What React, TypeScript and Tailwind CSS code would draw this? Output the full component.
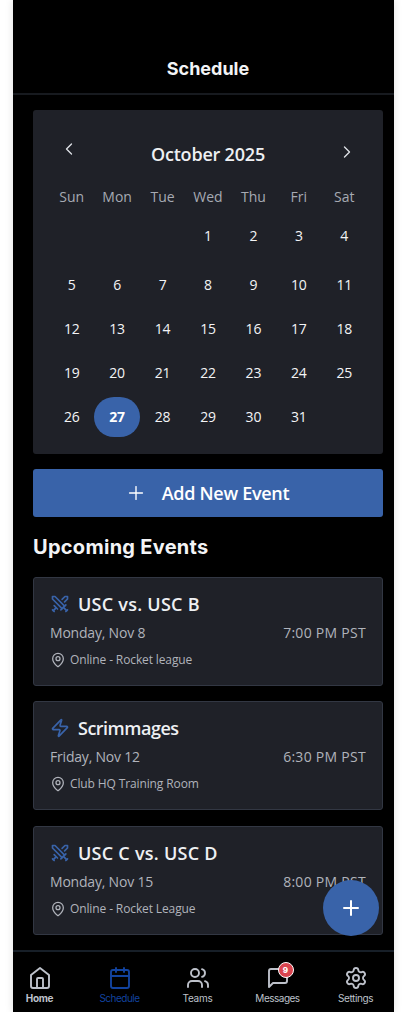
import React from "react";
import {
  Calendar,
  ChevronLeft,
  ChevronRight,
  MapPin,
  Plus,
  Settings,
  Swords,
  Users,
  Zap,
} from "lucide-react";

const weekdays = ["Sun", "Mon", "Tue", "Wed", "Thu", "Fri", "Sat"];

const weeks: (number | null)[][] = [
  [null, null, null, 1, 2, 3, 4],
  [5, 6, 7, 8, 9, 10, 11],
  [12, 13, 14, 15, 16, 17, 18],
  [19, 20, 21, 22, 23, 24, 25],
  [26, 27, 28, 29, 30, 31, null],
];

const selectedDay = 27;

function HomeIcon() {
  return (
    <svg viewBox="0 0 24 24" className="h-6 w-6" fill="none" stroke="currentColor" strokeWidth="1.9" strokeLinejoin="round" strokeLinecap="round">
      <path d="M3 9l9-7 9 7v11a2 2 0 0 1-2 2H5a2 2 0 0 1-2-2z" />
      <path d="M9 22V13a1 1 0 0 1 1-1h4a1 1 0 0 1 1 1v9" />
    </svg>
  );
}

function MessageIcon() {
  return (
    <svg viewBox="0 0 24 24" className="h-6 w-6" fill="none" stroke="currentColor" strokeWidth="1.9" strokeLinejoin="round" strokeLinecap="round">
      <path d="M21 15a2 2 0 0 1-2 2H7l-4 4V5a2 2 0 0 1 2-2h14a2 2 0 0 1 2 2z" />
    </svg>
  );
}

function CalendarCard() {
  return (
    <section className="h-[344px] shrink-0 rounded-[3px] bg-[#1f2128] px-4 pt-[15px]">
      <div className="flex h-14 items-center justify-between pr-[10px] pl-[10px]">
        <button className="-mt-2" aria-label="Previous month">
          <ChevronLeft className="h-5 w-5 text-[#dee1e6]" strokeWidth={1.6} />
        </button>
        <h2 className="mt-px text-[18px] leading-7 font-semibold tracking-[-0.2px] text-[#eef0f3]">October 2025</h2>
        <button className="-mt-[2px]" aria-label="Next month">
          <ChevronRight className="h-5 w-5 text-[#dee1e6]" strokeWidth={1.6} />
        </button>
      </div>
      <div className="grid h-[30px] grid-cols-7 items-center text-center text-[14px] text-[#a6aab3]">
        {weekdays.map((name) => (
          <span key={name}>{name}</span>
        ))}
      </div>
      <div className="flex flex-col gap-1 pt-[5px]">
        {weeks.map((week, w) => (
          <div key={w} className={w === 0 ? "mb-[5px] grid grid-cols-7" : "grid grid-cols-7"}>
            {week.map((day, d) => (
              <span
                key={d}
                className={
                  day === selectedDay
                    ? "flex h-10 items-center justify-center rounded-[20px] bg-[#3963a9] pb-px text-[14px] font-bold tracking-[-0.2px] text-white"
                    : "flex h-10 items-center justify-center pb-px text-[14px] tracking-[-0.2px] text-[#f3f4f6]"
                }
              >
                {day}
              </span>
            ))}
          </div>
        ))}
      </div>
    </section>
  );
}

type EventItem = {
  title: string;
  titleClass: string;
  date: string;
  time: string;
  place: string;
  kind: "match" | "practice";
};

const events: EventItem[] = [
  { title: "USC vs. USC B", titleClass: "tracking-[0.25px]", date: "Monday, Nov 8", time: "7:00 PM PST", place: "Online - Rocket league", kind: "match" },
  { title: "Scrimmages", titleClass: "tracking-[-0.5px]", date: "Friday, Nov 12", time: "6:30 PM PST", place: "Club HQ Training Room", kind: "practice" },
  { title: "USC C vs. USC D", titleClass: "tracking-[0.25px]", date: "Monday, Nov 15", time: "8:00 PM PST", place: "Online - Rocket League", kind: "match" },
];

function EventCard({ event }: { event: EventItem }) {
  const Icon = event.kind === "match" ? Swords : Zap;
  return (
    <article className="h-[109px] rounded-[3px] border border-[#323743] bg-[#1f2128] px-4 pt-3 last:mt-px">
      <div className="flex h-7 items-center gap-2">
        <Icon className="h-5 w-5 text-[#3963a9]" strokeWidth={2} />
        <h3 className={"-mt-px text-[18px] leading-7 font-semibold text-[#eef0f3] " + event.titleClass}>{event.title}</h3>
      </div>
      <div className="mt-1 flex h-5 items-center justify-between text-[14px] text-[#b0b3bb]">
        <span className="tracking-[-0.2px]">{event.date}</span>
        <span className="tracking-[0.28px]">{event.time}</span>
      </div>
      <div className="mt-2 flex h-5 items-center gap-1 text-[12px] tracking-[-0.12px] text-[#b0b3bb]">
        <MapPin className="h-4 w-4" strokeWidth={1.9} />
        <span>{event.place}</span>
      </div>
    </article>
  );
}

function NavItem({ label, icon, className }: { label: string; icon: React.ReactNode; className: string }) {
  return (
    <div className={"flex w-[79px] shrink-0 flex-col items-center pt-[14px] leading-4 " + className}>
      {icon}
      <span>{label}</span>
    </div>
  );
}

export default function App() {
  return (
    <div className="h-[1012px] w-[413px] overflow-hidden bg-white pl-[13px] font-['Open_Sans',sans-serif]">
      <main className="relative flex h-full w-[381px] flex-col bg-black shadow-[0_0_8px_rgba(0,0,0,0.12)]">
        <header className="flex h-[95px] shrink-0 items-end justify-center border-b-2 border-[#171a1f] pb-[10px] pl-[9px]">
          <h1 className="font-['Inter',sans-serif] text-[18px] leading-7 font-bold text-[#f3f4f6]">Schedule</h1>
        </header>
        <div className="flex h-[855px] shrink-0 flex-col pt-[15px] pr-[11px] pl-5">
          <CalendarCard />
          <button className="mt-[15px] flex h-12 shrink-0 items-center justify-center gap-[15px] rounded-[3px] bg-[#3963a9] pr-[2px] text-white">
            <Plus className="h-[22px] w-[22px]" strokeWidth={1.5} />
            <span className="-mt-px text-[18px] leading-7 font-semibold tracking-[-0.3px]">Add New Event</span>
          </button>
          <h2 className="mt-[14px] h-8 font-['Inter',sans-serif] text-[20px] leading-8 font-bold tracking-[0.28px] text-[#f3f4f6]">Upcoming Events</h2>
          <div className="mt-[14px] flex flex-col gap-[15px]">
            {events.map((event) => (
              <EventCard key={event.title} event={event} />
            ))}
          </div>
        </div>
        <nav className="flex h-[62px] shrink-0 overflow-hidden border-t-2 border-[#171f28] font-['Inter',sans-serif] text-[10px] text-[#bdc1ca]">
          <NavItem label="Home" className="-ml-[13px] font-bold tracking-[-0.3px]" icon={<HomeIcon />} />
          <NavItem label="Schedule" className="ml-px tracking-[-0.5px] text-[#12439f]" icon={<Calendar className="h-6 w-6" strokeWidth={1.9} />} />
          <NavItem label="Teams" className="-ml-px tracking-[-0.3px]" icon={<Users className="h-6 w-6" strokeWidth={1.9} />} />
          <NavItem
            label="Messages"
            className="ml-px tracking-[-0.5px]"
            icon={
              <div className="relative">
                <MessageIcon />
                <span className="absolute -top-[4px] left-[12px] flex h-4 w-4 items-center justify-center rounded-full border-[1.5px] border-white bg-[#d9444f] text-[8px] leading-none font-extrabold tracking-normal text-white">
                  9
                </span>
              </div>
            }
          />
          <NavItem label="Settings" className="-ml-px tracking-[-0.4px]" icon={<Settings className="h-6 w-6" strokeWidth={1.9} />} />
        </nav>
        <button className="absolute top-[880px] left-[310px] flex h-14 w-14 items-center justify-center rounded-full bg-[#3963a9]" aria-label="Add event">
          <Plus className="h-6 w-6 text-white" strokeWidth={2} />
        </button>
      </main>
    </div>
  );
}
